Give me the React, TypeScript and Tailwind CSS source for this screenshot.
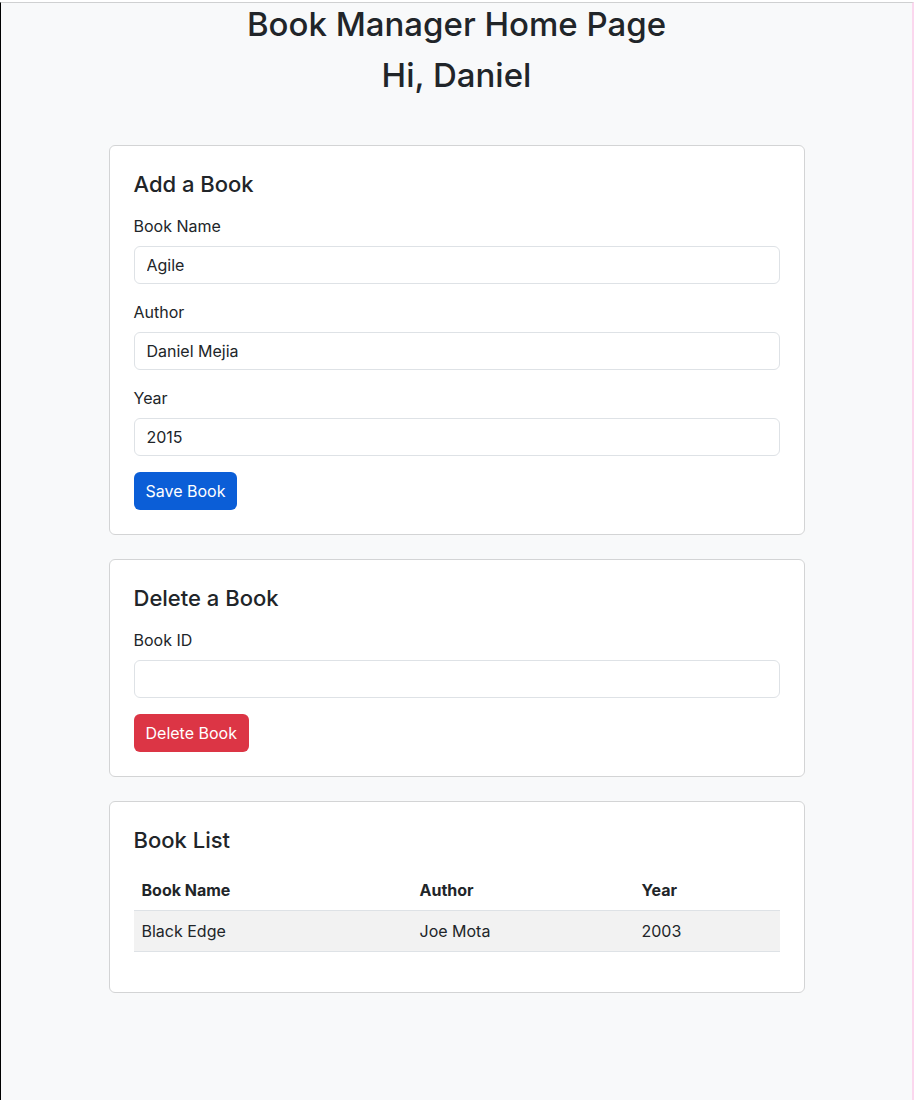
const font = "font-['Inter','Liberation_Sans',sans-serif]";

function Field({ label, value }: { label: string; value: string }) {
  return (
    <div className="mb-4">
      <label className="mb-2 block text-base leading-6">{label}</label>
      <input
        readOnly
        value={value}
        className="block h-[38px] w-full rounded-[6px] border border-[#dee2e6] bg-white px-3 text-base text-[#212529] outline-none"
      />
    </div>
  );
}

function Card({ title, children }: { title: string; children: React.ReactNode }) {
  return (
    <div className="rounded-[6px] border border-[#d3d4d5] bg-white p-6">
      <h4 className="mb-4 text-[22px] leading-[28px] font-medium">{title}</h4>
      {children}
    </div>
  );
}

export default function App() {
  const books = [{ name: "Black Edge", author: "Joe Mota", year: "2003" }];

  return (
    <div className={`min-h-screen bg-white pt-[2px] text-[#212529] ${font}`}>
      <div className="min-h-[1098px] border-t border-l border-r-2 border-t-[#cfd0d1] border-l-black border-r-[#fbd7ee] bg-[#f8f9fa]">
        <div className="mx-auto w-[720px] px-3">
          <h1 className="mb-2 text-center text-[33px] leading-[43px] font-medium">
            Book Manager Home Page
          </h1>
          <h1 className="mb-2 text-center text-[33px] leading-[43px] font-medium">Hi, Daniel</h1>

          <div className="mt-[48px] flex flex-col gap-6">
            <Card title="Add a Book">
              <Field label="Book Name" value="Agile" />
              <Field label="Author" value="Daniel Mejia" />
              <Field label="Year" value="2015" />
              <button className="h-[38px] rounded-[6px] bg-[#0b5ed7] px-3 text-base text-white">
                Save Book
              </button>
            </Card>

            <Card title="Delete a Book">
              <Field label="Book ID" value="" />
              <button className="h-[38px] rounded-[6px] bg-[#dc3545] px-3 text-base text-white">
                Delete Book
              </button>
            </Card>

            <Card title="Book List">
              <table className="mb-4 w-full border-collapse text-left text-base">
                <thead>
                  <tr className="border-b border-[#dee2e6]">
                    <th className="w-[278px] px-2 py-2 leading-6 font-bold">Book Name</th>
                    <th className="w-[222px] px-2 py-2 leading-6 font-bold">Author</th>
                    <th className="px-2 py-2 leading-6 font-bold">Year</th>
                  </tr>
                </thead>
                <tbody>
                  {books.map((b) => (
                    <tr key={b.name} className="border-b border-[#dee2e6] bg-[#f2f2f2]">
                      <td className="px-2 py-2 leading-6">{b.name}</td>
                      <td className="px-2 py-2 leading-6">{b.author}</td>
                      <td className="px-2 py-2 leading-6">{b.year}</td>
                    </tr>
                  ))}
                </tbody>
              </table>
            </Card>
          </div>
        </div>
      </div>
    </div>
  );
}
